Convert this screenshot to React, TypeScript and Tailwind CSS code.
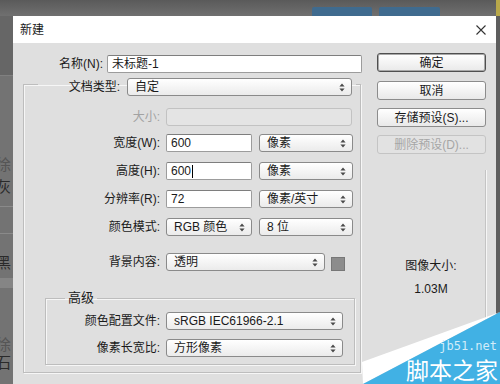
import React from 'react';

const cn = (...c: (string | false | undefined)[]) => c.filter(Boolean).join(' ');

const Arrows = () => (
  <svg width="6" height="9" viewBox="0 0 6 9" className="shrink-0">
    <path d="M3 0.5L5.6 3.6H0.4Z M3 8.5L0.4 5.4H5.6Z" fill="#4a4a4a" />
  </svg>
);

const Select: React.FC<{ value: string; w: string; disabled?: boolean }> = ({ value, w, disabled }) => (
  <div
    className={cn(
      'flex h-[18px] shrink-0 items-center justify-between rounded-[3px] border pl-[7px] pr-[6px]',
      disabled
        ? 'border-[#c2c2c2] bg-[#e4e4e4] text-[#a4a4a4]'
        : 'border-[#8a8a8a] bg-gradient-to-b from-white to-[#ebebeb] text-[#1a1a1a]',
      w
    )}
  >
    <span className="leading-[16px]">{value}</span>
    {!disabled && <Arrows />}
  </div>
);

const Input: React.FC<{ value: string; w: string; caret?: boolean }> = ({ value, w, caret }) => (
  <div
    className={cn(
      'flex h-[18px] shrink-0 items-center rounded-[2px] border border-[#9c9c9c] border-t-[#7e7e7e] bg-white pl-[4px] text-[#1a1a1a]',
      w
    )}
  >
    <span className="leading-[16px]">{value}</span>
    {caret && <span className="ml-[1px] h-[13px] w-px bg-black" />}
  </div>
);

const Button: React.FC<{ label: string; primary?: boolean; disabled?: boolean; className?: string }> = ({
  label,
  primary,
  disabled,
  className,
}) => (
  <div
    className={cn(
      'flex h-[19px] w-[109px] items-center justify-center rounded-[3px] border leading-[16px]',
      primary && 'border-[#4f4f4f] shadow-[inset_0_0_0_1px_#a8a8a8]',
      !primary && !disabled && 'border-[#8c8c8c]',
      disabled
        ? 'border-[#c4c4c4] bg-[#e2e2e2] text-[#a6a6a6]'
        : 'bg-gradient-to-b from-white to-[#e9e9e9] text-[#1a1a1a]',
      className
    )}
  >
    {label}
  </div>
);

const Row: React.FC<React.PropsWithChildren<{ label: string; lw: string; className?: string; muted?: boolean }>> = ({
  label,
  lw,
  className,
  muted,
  children,
}) => (
  <div className={cn('flex items-start gap-[6px]', className)}>
    <span className={cn('flex h-[18px] shrink-0 items-center justify-end leading-[16px]', lw, muted && 'text-[#a2a2a2]')}>
      {label}
    </span>
    {children}
  </div>
);

const etched = 'border border-[#bdbdbd] shadow-[1px_1px_0_#f6f6f6,inset_1px_1px_0_#f6f6f6]';

export default function App() {
  return (
    <div className="relative h-[384px] w-[500px] overflow-hidden bg-[#6a6a6a] font-['Liberation_Sans','Noto_Sans_CJK_SC',sans-serif] text-[12px] text-[#1a1a1a]">
      {/* page behind the dialog */}
      <div className="flex h-[16px] bg-gradient-to-b from-[#5a5a5a] to-[#707070]">
        <div className="ml-[312px] mt-[7px] h-[9px] w-[60px] rounded-t-[2px] bg-[#3f6b8f]" />
        <div className="ml-[7px] mt-[7px] h-[9px] w-[61px] rounded-t-[2px] bg-[#3f6b8f]" />
        <div className="ml-auto h-[16px] w-[4px] bg-[#b8a84a]" />
      </div>
      <div className="flex h-[368px]">
        <div className="flex w-[13px] shrink-0 flex-col overflow-hidden bg-[#737373] text-[15px] leading-[18px] text-[#2a2a2a]">
          <div className="h-[60px] border-b border-[#808080] bg-[#666]" />
          <div className="mt-[80px] -ml-[4px] text-[#555]">徐</div>
          <div className="mt-[4px] -ml-[4px]">灰</div>
          <div className="mt-[10px] h-px bg-[#8a8a8a]" />
          <div className="mt-[26px] h-px bg-[#8a8a8a]" />
          <div className="mt-[20px] -ml-[4px]">黑</div>
          <div className="mt-[6px] h-[10px] bg-[#858585]" />
          <div className="mt-[48px] -ml-[4px] text-[#555]">徐</div>
          <div className="-ml-[4px]">石</div>
        </div>

        {/* dialog */}
        <div className="flex w-[483px] shrink-0 flex-col">
          <div className="flex h-[27px] items-center justify-between bg-white pl-[7px] pr-[10px]">
            <span className="leading-[16px]">新建</span>
            <svg width="10" height="10" viewBox="0 0 10 10">
              <path d="M0.5 0.5L9.5 9.5M9.5 0.5L0.5 9.5" stroke="#333" strokeWidth="1.1" />
            </svg>
          </div>
          <div className="flex flex-1 bg-[#dfdfdf]">
            {/* left column */}
            <div className="flex w-[349px] shrink-0 flex-col pt-[12px]">
              <div className="flex items-center gap-[4px]">
                <span className="w-[90px] text-right leading-[16px]">名称(N):</span>
                <Input value="未标题-1" w="w-[255px]" />
              </div>

              <fieldset className={cn('ml-[10px] w-[338px] min-w-0 pb-[7px]', etched)}>
                <legend className="ml-[14px] pr-[4px] pt-[5px]">
                  <div className="flex items-center gap-[7px]">
                    <span className="w-[82px] text-right leading-[16px]">文档类型:</span>
                    <Select value="自定" w="w-[225px]" />
                  </div>
                </legend>

                <Row label="大小:" lw="w-[136px]" className="mt-[12px]" muted>
                  <Select value="" w="w-[186px]" disabled />
                </Row>
                <Row label="宽度(W):" lw="w-[136px]" className="mt-[8px]">
                  <Input value="600" w="w-[86px]" />
                  <Select value="像素" w="w-[94px] ml-[1px]" />
                </Row>
                <Row label="高度(H):" lw="w-[136px]" className="mt-[10px]">
                  <Input value="600" w="w-[86px]" caret />
                  <Select value="像素" w="w-[94px] ml-[1px]" />
                </Row>
                <Row label="分辨率(R):" lw="w-[136px]" className="mt-[10px]">
                  <Input value="72" w="w-[86px]" />
                  <Select value="像素/英寸" w="w-[94px] ml-[1px]" />
                </Row>
                <Row label="颜色模式:" lw="w-[136px]" className="mt-[10px]">
                  <Select value="RGB  颜色" w="w-[86px]" />
                  <Select value="8 位" w="w-[94px] ml-[1px]" />
                </Row>
                <Row label="背景内容:" lw="w-[136px]" className="mt-[17px]">
                  <Select value="透明" w="w-[159px]" />
                  <div className="mt-[4px] h-[14px] w-[14px] border border-[#777] bg-[#8c8c8c]" />
                </Row>

                <fieldset className={cn('ml-[21px] mt-[19px] w-[310px] min-w-0 pb-[7px]', etched)}>
                  <legend className="ml-[19px] px-[3px] text-[13px] leading-[16px]">高级</legend>
                  <Row label="颜色配置文件:" lw="w-[114px]" className="mt-[6px]">
                    <Select value="sRGB IEC61966-2.1" w="w-[177px]" />
                  </Row>
                  <Row label="像素长宽比:" lw="w-[114px]" className="mt-[9px]">
                    <Select value="方形像素" w="w-[177px]" />
                  </Row>
                </fieldset>
              </fieldset>
            </div>

            {/* right column */}
            <div className="ml-[15px] flex w-[109px] shrink-0 flex-col pt-[10px]">
              <Button label="确定" primary />
              <Button label="取消" className="mt-[9px]" />
              <Button label="存储预设(S)..." className="mt-[8px]" />
              <Button label="删除预设(D)..." className="mt-[8px]" disabled />
              <div className="mt-[16px] flex flex-1 flex-col items-center border-r border-[#c4c4c4] pt-[88px] shadow-[1px_0_0_#f6f6f6]">
                <span className="leading-[16px]">图像大小:</span>
                <span className="mt-[7px] leading-[16px]">1.03M</span>
              </div>
            </div>
          </div>
        </div>

        <div className="w-[4px] shrink-0 bg-[#5e5e5e]" />
      </div>

      {/* watermark */}
      <div className="absolute left-[360px] top-[310px] h-[74px] w-[140px]">
        <svg width="140" height="74" viewBox="0 0 140 74" className="absolute left-0 top-0">
          <polygon points="2,52 140,2 3,74" fill="#ffffff" />
          <polygon points="3,74 140,2 140,74" fill="#41b1e4" />
        </svg>
        <span className="absolute right-[3px] top-[30px] font-['DejaVu_Sans_Mono',monospace] text-[12px] leading-[12px] text-[#d2ecf9]">
          jb51.net
        </span>
        <span className="absolute right-[2px] top-[48px] font-['Noto_Sans_CJK_SC',sans-serif] text-[23px] leading-[23px] text-white">
          脚本之家
        </span>
      </div>
    </div>
  );
}
